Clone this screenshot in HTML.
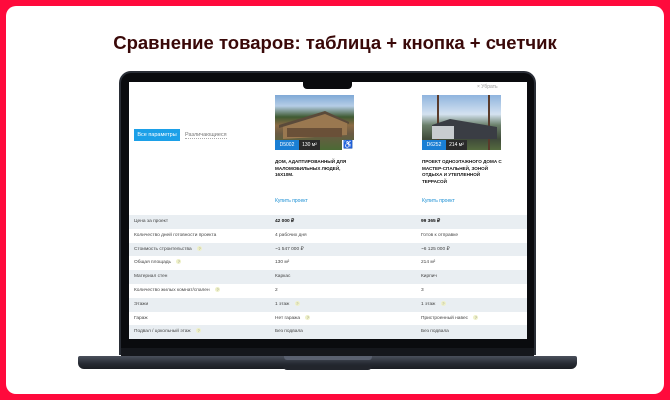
<!DOCTYPE html>
<html><head><meta charset="utf-8"><style>
*{margin:0;padding:0;box-sizing:border-box}
body{width:670px;height:400px;background:#ff0a3c;position:relative;overflow:hidden;font-family:"Liberation Sans",sans-serif}
.card{position:absolute;left:6px;top:6px;width:658px;height:388px;background:#fff;border-radius:10px}
h1{position:absolute;top:32px;left:0;width:670px;text-align:center;font-size:18.5px;font-weight:bold;color:#3a0909}
.lid{position:absolute;left:119px;top:71px;width:417px;height:284px;background:#0a0b0e;border-radius:12px 12px 0 0;border:2px solid #2a2e36;border-bottom:none}
.hinge{position:absolute;left:121px;top:348px;width:413px;height:8px;background:#15171c}
.base{position:absolute;left:78px;top:356px;width:499px;height:13px;background:linear-gradient(#4a505c,#262a32 60%,#1a1d23);border-radius:2px 2px 6px 6px}
.foot{position:absolute;left:283px;top:366px;width:89px;height:4px;background:#22252c;border-radius:0 0 4px 4px}
.notchb{position:absolute;left:284px;top:356px;width:88px;height:4px;background:#5a6170;border-radius:0 0 3px 3px}
.screen{position:absolute;left:129px;top:82px;width:398px;height:257px;background:#fff;overflow:hidden;font-size:5px;color:#333}
.notch{position:absolute;left:174px;top:0;width:49px;height:7px;background:#0a0b0e;border-radius:0 0 4px 4px}
.btn{position:absolute;left:5px;top:47px;width:46px;height:12px;background:#1ca0e8;color:#fff;font-size:5.5px;line-height:12px;text-align:center}
.diff{position:absolute;left:56px;top:50px;font-size:5.5px;color:#777;border-bottom:1px dotted #aaa}
.img{position:absolute;top:13px;width:79px;height:55px}
.b1{position:absolute;bottom:0;left:0;height:10px;width:24px;background:#1a7fd4;color:#fff;font-size:5px;line-height:10px;text-align:center}
.b2{position:absolute;bottom:0;left:24px;height:10px;width:21px;background:#2a2a2a;color:#fff;font-size:5px;line-height:10px;text-align:center}
.acc{position:absolute;bottom:0;right:0;width:12px;height:10px;background:#fff;color:#1a7fd4;font-size:8px;line-height:10px;text-align:center}
.t{position:absolute;top:77px;width:80px;font-size:4.6px;font-weight:bold;color:#111;line-height:6.5px;text-transform:uppercase}
.buy{position:absolute;top:116px;font-size:5px;color:#1a8fd4}
.rm{position:absolute;left:348px;top:2px;font-size:5px;color:#999}
.rows{position:absolute;left:0;top:133px;width:398px}
.r{height:13.8px;line-height:13.8px;position:relative;font-size:4.8px;color:#444}
.r:nth-child(odd){background:#e9eef2}
.r span{position:absolute}
.c1{left:5px}.c2{left:146px}.c3{left:292px}
.q{display:inline-block;width:5px;height:5px;border-radius:50%;background:#eef0c8;color:#998;font-size:4px;line-height:5px;text-align:center;margin-left:4px}
</style></head><body>
<div class="card"></div>
<h1>Сравнение товаров: таблица + кнопка + счетчик</h1>
<div class="lid"></div>
<div class="hinge"></div>
<div class="base"></div>
<div class="notchb"></div>
<div class="foot"></div>
<div class="screen">
<div class="notch"></div>
<div class="rm">× Убрать</div>
<div class="btn">Все параметры</div>
<div class="diff">Различающиеся</div>
<div class="img" style="left:146px;background:linear-gradient(#7fa9d6 0%,#b5cde6 20%,#3f5a32 40%,#8a6a44 55%,#6b5a44 70%,#4b6a35 100%)">
<svg width="79" height="55" style="position:absolute;left:0;top:0"><polygon points="8,30 50,18 72,28 72,40 8,44" fill="#9a7850"/><polygon points="4,30 50,16 74,27 74,29 50,19 4,33" fill="#5a4a3a"/><rect x="12" y="33" width="55" height="9" fill="#6a5038"/></svg>
<div class="b1">D5002</div><div class="b2">130 м²</div><div class="acc">♿</div></div>
<div class="img" style="left:293px;background:linear-gradient(#8fb4de 0%,#d4e2f0 35%,#6a7f6a 55%,#3f4a3a 80%,#556b3f 100%)">
<svg width="79" height="55" style="position:absolute;left:0;top:0"><rect x="15" y="0" width="2" height="55" fill="#5a3a2a"/><rect x="66" y="0" width="2" height="55" fill="#5a3a2a"/><polygon points="10,30 28,24 75,32 75,44 10,44" fill="#3a3d44"/><rect x="10" y="31" width="22" height="13" fill="#c8ccd0"/></svg>
<div class="b1">D6252</div><div class="b2">214 м²</div></div>
<div class="t" style="left:146px">Дом, адаптированный для маломобильных людей, 16х10м.</div>
<div class="t" style="left:293px">Проект одноэтажного дома с мастер-спальней, зоной отдыха и утепленной террасой</div>
<div class="buy" style="left:146px">Купить проект</div>
<div class="buy" style="left:293px">Купить проект</div>
<div class="rows">
<div class="r"><span class="c1">Цена за проект</span><span class="c2"><b style="color:#111">42 000 ₽</b></span><span class="c3"><b style="color:#111">99 365 ₽</b></span></div>
<div class="r"><span class="c1">Количество дней готовности проекта</span><span class="c2">4 рабочих дня</span><span class="c3">Готов к отправке</span></div>
<div class="r"><span class="c1">Стоимость строительства <i class="q">?</i></span><span class="c2">~1 547 000 ₽</span><span class="c3">~6 125 000 ₽</span></div>
<div class="r"><span class="c1">Общая площадь <i class="q">?</i></span><span class="c2">130 м²</span><span class="c3">214 м²</span></div>
<div class="r"><span class="c1">Материал стен</span><span class="c2">Каркас</span><span class="c3">Кирпич</span></div>
<div class="r"><span class="c1">Количество жилых комнат/спален <i class="q">?</i></span><span class="c2">2</span><span class="c3">3</span></div>
<div class="r"><span class="c1">Этажи</span><span class="c2">1 этаж <i class="q">?</i></span><span class="c3">1 этаж <i class="q">?</i></span></div>
<div class="r"><span class="c1">Гараж</span><span class="c2">Нет гаража <i class="q">?</i></span><span class="c3">Пристроенный навес <i class="q">?</i></span></div>
<div class="r"><span class="c1">Подвал / цокольный этаж <i class="q">?</i></span><span class="c2">Без подвала</span><span class="c3">Без подвала</span></div>
</div>
</div>
</body></html>
